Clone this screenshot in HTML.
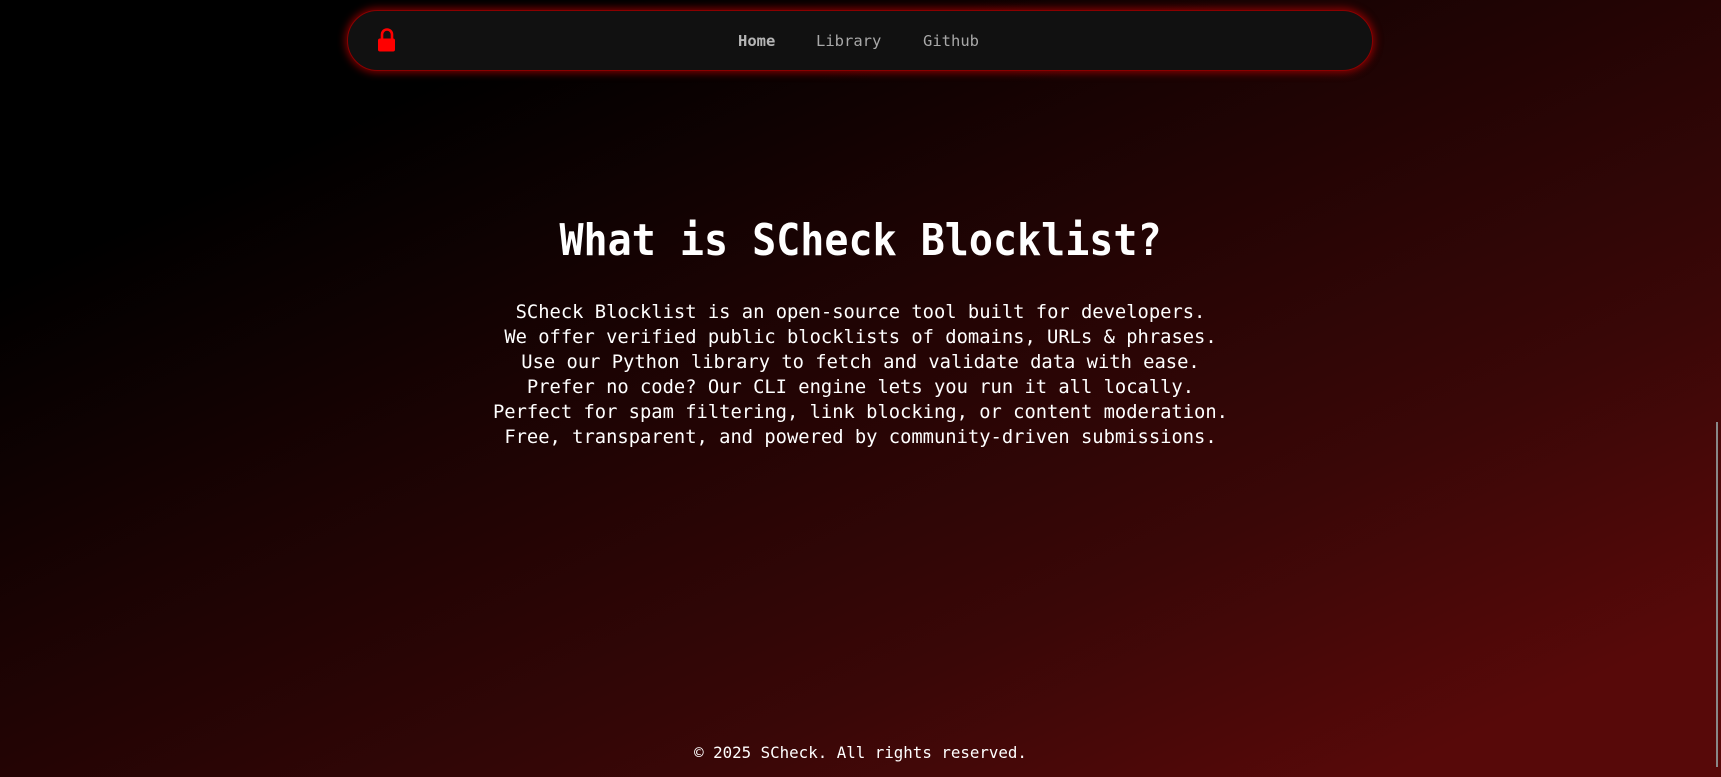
<!DOCTYPE html>
<html><head><meta charset="utf-8"><style>
html,body{margin:0;padding:0;width:1721px;height:777px;overflow:hidden}
body{background:linear-gradient(155deg,#000 0%,#000 18%,#1a0303 40%,#3a0707 70%,#570909 90%,#570909 100%);font-family:"DejaVu Sans Mono","Liberation Mono",monospace;color:#fff;position:relative}
.nav{position:absolute;left:347px;top:10px;width:1026px;height:61px;box-sizing:border-box;background:#111;border:1px solid #8a0000;border-radius:32px;box-shadow:0 0 8px 2px rgba(220,0,0,.55)}
.nav a{position:absolute;top:20px;font-size:15.5px;color:#a8a8a8;text-decoration:none;line-height:20px}
h1{position:absolute;left:0;width:1721px;top:215px;margin:0;text-align:center;font-size:40px;font-weight:bold;line-height:52px;transform:scaleY(1.08)}
.p{position:absolute;left:0;width:1721px;top:300px;text-align:center;font-size:18.8px;line-height:25px}
.f{position:absolute;left:0;width:1721px;top:743px;text-align:center;font-size:15.8px;line-height:20px}
.sb{position:absolute;left:1716px;top:422px;width:2px;height:345px;background:#888}
</style></head><body>
<div class="nav">
<svg style="position:absolute;left:29px;top:16px" width="20" height="27" viewBox="0 0 20 26"><path d="M5 12V7a5 5 0 0 1 10 0v5" fill="none" stroke="#f00" stroke-width="2.6"/><rect x="1" y="11" width="17" height="13" rx="2" fill="#f00"/></svg>
<a style="left:390px;color:#b5b5b5;font-weight:bold">Home</a>
<a style="left:468px">Library</a>
<a style="left:575px">Github</a>
</div>
<h1>What is SCheck Blocklist?</h1>
<div class="p">SCheck Blocklist is an open-source tool built for developers.<br>We offer verified public blocklists of domains, URLs &amp; phrases.<br>Use our Python library to fetch and validate data with ease.<br>Prefer no code? Our CLI engine lets you run it all locally.<br>Perfect for spam filtering, link blocking, or content moderation.<br>Free, transparent, and powered by community-driven submissions.</div>
<div class="f">© 2025 SCheck. All rights reserved.</div>
<div class="sb"></div>
</body></html>
